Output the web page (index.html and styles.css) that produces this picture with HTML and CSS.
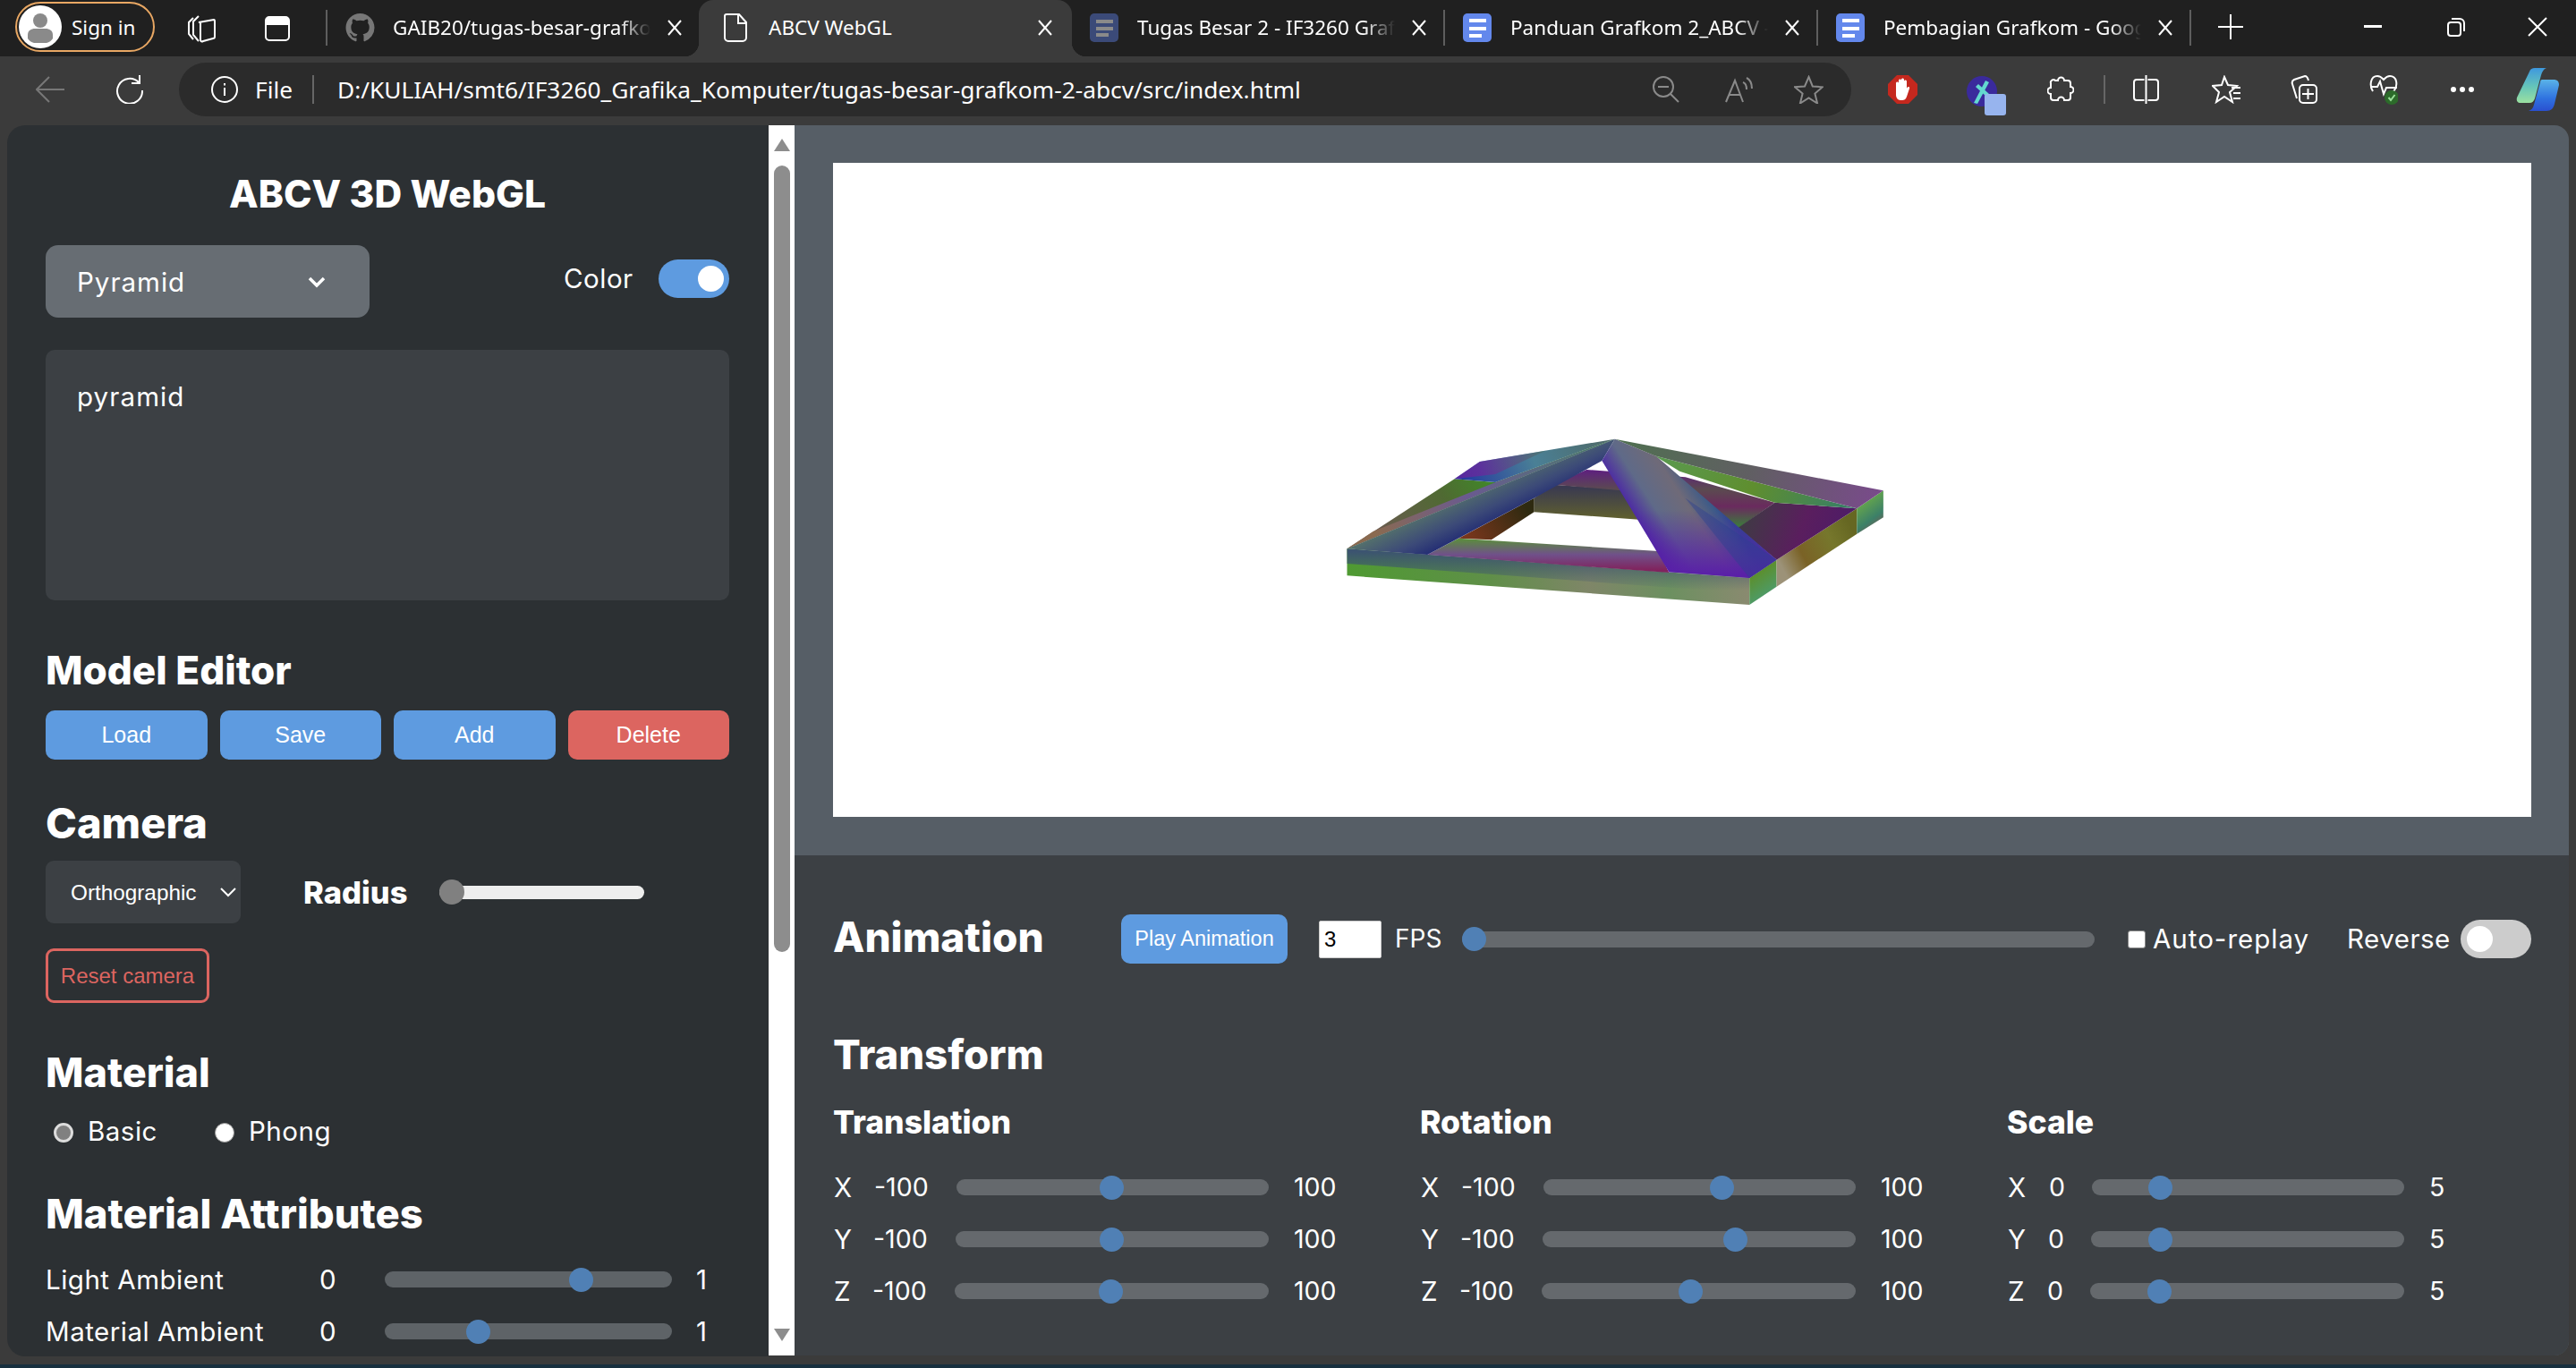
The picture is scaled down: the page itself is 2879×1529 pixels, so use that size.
FILE: index.html
```html
<!DOCTYPE html>
<html lang="en">
<head>
<meta charset="utf-8">
<title>ABCV WebGL</title>
<link rel="stylesheet" href="styles.css">
</head>
<body>
<header class="tabstrip">
  <div class="signin">
    <svg width="48" height="48" viewBox="0 0 48 48"><circle cx="24" cy="24" r="24" fill="#fff"/><circle cx="24" cy="17" r="8" fill="#8a8a8a"/><path d="M10 33c0-5 4-7 8-7h12c4 0 8 2 8 7v4a11 11 0 0 1-7 5H17a11 11 0 0 1-7-5z" fill="#8a8a8a"/></svg>
    <span>Sign in</span>
  </div>
  <svg class="ws" width="32" height="32" viewBox="0 0 32 32" fill="none" stroke="#fff" stroke-width="2"><path d="M6 4 1 9v13l5 6"/><path d="M12 2 6 8v15l6 7"/><path d="M13 9l17-3c1 0 1 1 1 2v17c0 1-1 2-2 2l-11 3c-2 1-3 0-3-2V11c0-1 0-2 1-2z" transform="translate(-1 0)"/></svg>
  <svg class="tabicon" width="28" height="28" viewBox="0 0 28 28" fill="none"><rect x="1" y="1" width="26" height="26" rx="4" stroke="#fff" stroke-width="2"/><path d="M1 5a4 4 0 0 1 4-4h18a4 4 0 0 1 4 4v5H1z" fill="#fff"/></svg>
  <i class="vsep"></i>
  <div class="tab">
    <svg class="fav" width="33" height="32" viewBox="0 0 16 16" fill="#777"><path d="M8 0C3.58 0 0 3.58 0 8c0 3.54 2.29 6.53 5.47 7.59.4.07.55-.17.55-.38 0-.19-.01-.82-.01-1.49-2.01.37-2.53-.49-2.69-.94-.09-.23-.48-.94-.82-1.13-.28-.15-.68-.52-.01-.53.63-.01 1.08.58 1.23.82.72 1.21 1.87.87 2.33.66.07-.52.28-.87.51-1.07-1.78-.2-3.64-.89-3.64-3.95 0-.87.31-1.59.82-2.15-.08-.2-.36-1.02.08-2.12 0 0 .67-.21 2.2.82.64-.18 1.32-.27 2-.27.68 0 1.36.09 2 .27 1.53-1.04 2.2-.82 2.2-.82.44 1.1.16 1.92.08 2.12.51.56.82 1.27.82 2.15 0 3.07-1.87 3.75-3.65 3.95.29.25.54.73.54 1.48 0 1.07-.01 1.93-.01 2.2 0 .21.15.46.55.38A8.013 8.013 0 0016 8c0-4.42-3.58-8-8-8z"/></svg>
    <span class="title fade">GAIB20/tugas-besar-grafkom-2-abcv</span>
    <svg class="x" width="18" height="18" viewBox="0 0 18 18" stroke="#fff" stroke-width="2"><path d="M2 1l14 16M16 1 2 17"/></svg>
  </div>
  <div class="tab active">
    <svg class="fav" width="33" height="32" viewBox="0 0 33 32" fill="none" stroke="#fff" stroke-width="2"><path d="M6 1h14l8 9v17a4 4 0 0 1-4 4H8a4 4 0 0 1-4-4V3a2 2 0 0 1 2-2z"/><path d="M19 1v10h9"/></svg>
    <span class="title">ABCV WebGL</span>
    <svg class="x" width="18" height="18" viewBox="0 0 18 18" stroke="#fff" stroke-width="2"><path d="M2 1l14 16M16 1 2 17"/></svg>
  </div>
  <div class="tab">
    <svg class="fav" width="33" height="32" viewBox="0 0 33 32"><rect width="32" height="32" rx="5" fill="#3b4a78"/><path d="M7 7h19v4H7zM7 15h19v4H7zM7 22h14v4H7z" fill="#8a8a8a"/></svg>
    <span class="title fade">Tugas Besar 2 - IF3260 Grafika Komputer</span>
    <svg class="x" width="18" height="18" viewBox="0 0 18 18" stroke="#fff" stroke-width="2"><path d="M2 1l14 16M16 1 2 17"/></svg>
  </div>
  <i class="vsep"></i>
  <div class="tab">
    <svg class="fav" width="33" height="32" viewBox="0 0 33 32"><rect width="32" height="32" rx="5" fill="#6388ec"/><path d="M7 6h19v4H7zM7 15h19v4H7zM7 23h14v4H7z" fill="#fff"/></svg>
    <span class="title fade">Panduan Grafkom 2_ABCV - Google</span>
    <svg class="x" width="18" height="18" viewBox="0 0 18 18" stroke="#fff" stroke-width="2"><path d="M2 1l14 16M16 1 2 17"/></svg>
  </div>
  <i class="vsep"></i>
  <div class="tab">
    <svg class="fav" width="33" height="32" viewBox="0 0 33 32"><rect width="32" height="32" rx="5" fill="#6388ec"/><path d="M7 6h19v4H7zM7 15h19v4H7zM7 23h14v4H7z" fill="#fff"/></svg>
    <span class="title fade">Pembagian Grafkom - Google Docs</span>
    <svg class="x" width="18" height="18" viewBox="0 0 18 18" stroke="#fff" stroke-width="2"><path d="M2 1l14 16M16 1 2 17"/></svg>
  </div>
  <i class="vsep"></i>
  <svg class="plus" width="28" height="28" viewBox="0 0 28 28" stroke="#fff" stroke-width="2"><path d="M14 0v28M0 14h28"/></svg>
  <svg class="win-min" width="20" height="4" viewBox="0 0 20 4"><path d="M0 0h20v3H0z" fill="#fff"/></svg>
  <svg class="win-res" width="20" height="22" viewBox="0 0 20 22" fill="none" stroke="#fff" stroke-width="2"><rect x="1" y="6" width="14" height="15" rx="3"/><path d="M5 2h9a5 5 0 0 1 5 5v9"/></svg>
  <svg class="win-x" width="22" height="22" viewBox="0 0 22 22" stroke="#fff" stroke-width="2"><path d="M1 1l20 20M21 1 1 21"/></svg>
</header>

<nav class="toolbar">
  <svg class="back" width="32" height="30" viewBox="0 0 32 30" fill="none" stroke="#777" stroke-width="2"><path d="M32 15H2M15 1 1 15l14 14"/></svg>
  <svg class="reload" width="32" height="32" viewBox="0 0 32 32" fill="none" stroke="#fff" stroke-width="2"><path d="M27 8a14 14 0 1 0 4 9"/><path d="M28 0v9h-9"/></svg>
  <div class="address">
    <svg class="info" width="30" height="30" viewBox="0 0 30 30" fill="none" stroke="#fff" stroke-width="2"><circle cx="15" cy="15" r="14"/><path d="M15 13v9M15 8v2.500"/></svg>
    <span class="file">File</span>
    <i class="addr-sep"></i>
    <span class="url">D:/KULIAH/smt6/IF3260_Grafika_Komputer/tugas-besar-grafkom-2-abcv/src/index.html</span>
    <svg class="zoom-ic" width="30" height="30" viewBox="0 0 30 30" fill="none" stroke="#8a8a8a" stroke-width="2"><circle cx="12" cy="12" r="11"/><path d="M6 12h12M20 20l9 9"/></svg>
    <svg class="read-ic" width="32" height="30" viewBox="0 0 32 30" fill="none" stroke="#8a8a8a" stroke-width="2"><path d="M2 29 12 5l9 24M5 21h13"/><path d="M21 7c3 1 4 4 4 8M25 2c4 2 6 6 6 12"/></svg>
    <svg class="star-ic" width="33" height="32" viewBox="0 0 33 32" fill="none" stroke="#8a8a8a" stroke-width="2"><path d="M16.500 2l4.300 10.500 11 .8-8.400 7.300 2.700 10.900-9.600-6-9.600 6 2.700-10.900L1 13.300l11-.8z"/></svg>
  </div>
  <svg class="t-shield" width="33" height="32" viewBox="0 0 33 32"><path d="M10 0h13l10 10v12L23 32H10L0 22V10z" fill="#c5281e"/><path d="M9 17V9c0-2 3-2 3 0V6c0-2 3-2 3 0V5c0-2 3-2 3 0v2c0-2 3-2 3 0v8c1-3 4-2 3 0l-3 9c-1 3-3 4-5 4h-2c-3 0-5-3-5-6z" fill="#fff"/></svg>
  <svg class="t-ext" width="44" height="44" viewBox="0 0 44 44"><circle cx="17" cy="17" r="17" fill="#3a2a9c"/><path d="M21 5 8 30l4 1L25 7z" fill="#63d8cf"/><path d="M13 9l12 11-3 3-12-11z" fill="#63d8cf"/><rect x="20" y="20" width="24" height="24" rx="3" fill="#97b4ee"/></svg>
  <svg class="t-puzzle" width="30" height="32" viewBox="0 0 30 32" fill="none" stroke="#fff" stroke-width="2"><path d="M9 6h3a3.500 3.500 0 1 1 7 0h4a3 3 0 0 1 3 3v4a3.500 3.500 0 1 1 0 7v5a3 3 0 0 1-3 3h-4a3.500 3.500 0 1 0-7 0H7a3 3 0 0 1-3-3v-4a3.500 3.500 0 1 1 0-7V9a3 3 0 0 1 5-3z"/></svg>
  <i class="tool-sep"></i>
  <svg class="t-split" width="29" height="32" viewBox="0 0 29 32" fill="none" stroke="#fff" stroke-width="2"><rect x="1" y="5" width="27" height="23" rx="3"/><path d="M14.500 0v32" stroke="#3b3b3b" stroke-width="4"/><path d="M14.500 0v32"/></svg>
  <svg class="t-fav" width="32" height="32" viewBox="0 0 32 32" fill="none" stroke="#fff" stroke-width="2"><path d="M14 2l4 9 10 1-8 7 3 11-9-6-9 6 3-11-7-7 10-1zM22 14h10M24 20h8M24 26h8"/></svg>
  <svg class="t-coll" width="30" height="32" viewBox="0 0 30 32" fill="none" stroke="#fff" stroke-width="2"><path d="M7 26 2 10c-1-3 0-4 2-5l12-4c2 0 3 1 4 5"/><rect x="10" y="11" width="19" height="20" rx="4"/><path d="M19.500 15v12M13 21h13"/></svg>
  <svg class="t-heart" width="32" height="36" viewBox="0 0 32 36" fill="none" stroke="#fff" stroke-width="2"><path d="M4 20C0 14 1 3 9 3c4 0 6 3 7 4 1-1 3-4 7-4 8 0 9 10 5 16l-8 9"/><path d="M1 15h8l3-6 4 14 3-7h12"/><circle cx="25" cy="27" r="8" fill="#2c6b2a" stroke="none"/><path d="M21.500 27l2.500 3 4.500-6" stroke="#9be09a"/></svg>
  <svg class="t-dots" width="26" height="6" viewBox="0 0 26 6" fill="#fff"><circle cx="3" cy="3" r="3"/><circle cx="13" cy="3" r="3"/><circle cx="23" cy="3" r="3"/></svg>
  <svg class="t-copilot" width="48" height="48" viewBox="0 0 48 48">
    <defs>
      <linearGradient id="cp1" x1="0" y1="0" x2="0" y2="1"><stop offset="0" stop-color="#3e98df"/><stop offset=".55" stop-color="#67c6b8"/><stop offset="1" stop-color="#9be0a0"/></linearGradient>
      <linearGradient id="cp2" x1="0" y1="0" x2="0" y2="1"><stop offset="0" stop-color="#5ab3e8"/><stop offset=".6" stop-color="#2f72e0"/><stop offset="1" stop-color="#2a50d0"/></linearGradient>
    </defs>
    <path d="M15 4c1-3 3-4 6-4h13c-3 1-5 4-6 8l-7 26c-1 3-3 5-6 5H5c-3 0-5-2-4-6z" fill="url(#cp1)"/>
    <path d="M29 13h13c4 0 6 2 6 6l-5 21c-1 5-4 8-9 8H14c3-1 5-3 6-7l7-25c0-2 1-3 2-3z" fill="url(#cp2)"/>
  </svg>
</nav>

<main class="workspace">
  <aside class="sidebar">
    <h1 class="app-title">ABCV 3D WebGL</h1>
    <div class="model-row">
      <div class="select-wrap">
        <select class="model-select"><option>Pyramid</option></select>
        <svg class="chev" width="20" height="13" viewBox="0 0 20 13" fill="none" stroke="#fff" stroke-width="3.500"><path d="M2 2l8 8 8-8"/></svg>
      </div>
      <div class="color-group">
        <span class="txt">Color</span>
        <span class="toggle on"><i></i></span>
      </div>
    </div>
    <div class="desc">pyramid</div>
    <h2 class="h-editor">Model Editor</h2>
    <div class="btn-grid">
      <button class="btn">Load</button>
      <button class="btn">Save</button>
      <button class="btn">Add</button>
      <button class="btn danger">Delete</button>
    </div>
    <h2 class="h-camera">Camera</h2>
    <div class="camera-row">
      <div class="select-wrap small">
        <select class="cam-select"><option>Orthographic</option></select>
        <svg class="chev2" width="18" height="11" viewBox="0 0 18 11" fill="none" stroke="#fff" stroke-width="2"><path d="M1 1l8 8 8-8"/></svg>
      </div>
      <span class="radius">Radius</span>
      <input class="radius-range" type="range" min="0" max="100" value="0">
    </div>
    <button class="reset">Reset camera</button>
    <h2 class="h-material">Material</h2>
    <div class="radios">
      <label class="radio-item first"><input type="radio" name="mat" checked><span class="txt">Basic</span></label>
      <label class="radio-item"><input type="radio" name="mat"><span class="txt">Phong</span></label>
    </div>
    <h2 class="h-attr">Material Attributes</h2>
    <div class="attr first-attr"><span class="txt">Light Ambient</span><span class="txt">0</span><input class="rng dark" type="range" min="0" max="100" value="69.500"><span class="txt attr-max">1</span></div>
    <div class="attr"><span class="txt">Material Ambient</span><span class="txt">0</span><input class="rng dark" type="range" min="0" max="100" value="30.800"><span class="txt attr-max">1</span></div>
  </aside>
  <div class="scrollbar">
    <svg width="18" height="14" viewBox="0 0 18 14"><path d="M9 0 18 14H0z" fill="#8d8d8d"/></svg>
    <div class="scroll-thumb"></div>
    <svg class="scroll-down" width="18" height="14" viewBox="0 0 18 14"><path d="M9 14 18 0H0z" fill="#8d8d8d"/></svg>
  </div>
  <section class="stage">
    <div class="canvas-wrap">
      <div class="gl-canvas">
        <svg class="model" width="680" height="240" viewBox="0 0 1568 720" preserveAspectRatio="none">
          <defs>
            <linearGradient id="g1" gradientUnits="userSpaceOnUse" x1="130" y1="560" x2="1165" y2="560"><stop offset="0" stop-color="#4f9a32"/><stop offset=".35" stop-color="#5f8f48"/><stop offset=".6" stop-color="#7f8668"/><stop offset=".8" stop-color="#6c9060"/><stop offset="1" stop-color="#8a8a70"/></linearGradient>
            <linearGradient id="g1t" gradientUnits="userSpaceOnUse" x1="0" y1="470" x2="0" y2="600"><stop offset="0" stop-color="#3c5470"/><stop offset="1" stop-color="#3c5470" stop-opacity="0"/></linearGradient>
            <linearGradient id="g2" gradientUnits="userSpaceOnUse" x1="1165" y1="560" x2="1235" y2="640"><stop offset="0" stop-color="#5b8f2f"/><stop offset=".6" stop-color="#4f9a62"/><stop offset="1" stop-color="#7a6fb0"/></linearGradient>
            <linearGradient id="g3" gradientUnits="userSpaceOnUse" x1="1240" y1="500" x2="1440" y2="420"><stop offset="0" stop-color="#9c9278"/><stop offset=".3" stop-color="#7a6226"/><stop offset=".7" stop-color="#76772c"/><stop offset="1" stop-color="#666722"/></linearGradient>
            <linearGradient id="g4" gradientUnits="userSpaceOnUse" x1="1442" y1="330" x2="1510" y2="400"><stop offset="0" stop-color="#5fa050"/><stop offset=".5" stop-color="#3c8068"/><stop offset="1" stop-color="#8a4a4a"/></linearGradient>
            <linearGradient id="g5" gradientUnits="userSpaceOnUse" x1="818" y1="100" x2="1510" y2="300"><stop offset="0" stop-color="#4f7050"/><stop offset=".5" stop-color="#605f62"/><stop offset="1" stop-color="#7a4a8c"/></linearGradient>
            <linearGradient id="g6" gradientUnits="userSpaceOnUse" x1="920" y1="150" x2="1440" y2="320"><stop offset="0" stop-color="#5a9a50"/><stop offset=".5" stop-color="#5f8e2f"/><stop offset="1" stop-color="#357e6a"/></linearGradient>
            <linearGradient id="g7" gradientUnits="userSpaceOnUse" x1="1150" y1="350" x2="1400" y2="420"><stop offset="0" stop-color="#3f3a44"/><stop offset=".6" stop-color="#5a1e5e"/><stop offset="1" stop-color="#4f1c66"/></linearGradient>
            <linearGradient id="g8" gradientUnits="userSpaceOnUse" x1="200" y1="400" x2="510" y2="230"><stop offset="0" stop-color="#6a5a50"/><stop offset=".6" stop-color="#4f6a32"/><stop offset="1" stop-color="#3f8a28"/></linearGradient>
            <linearGradient id="g9" gradientUnits="userSpaceOnUse" x1="420" y1="230" x2="800" y2="100"><stop offset="0" stop-color="#2438a0"/><stop offset=".5" stop-color="#4a8096"/><stop offset="1" stop-color="#4f6a68"/></linearGradient>
            <linearGradient id="g10" gradientUnits="userSpaceOnUse" x1="470" y1="180" x2="640" y2="150"><stop offset="0" stop-color="#7a1e9c"/><stop offset="1" stop-color="#4a7060"/></linearGradient>
            <linearGradient id="g11" gradientUnits="userSpaceOnUse" x1="400" y1="270" x2="500" y2="430"><stop offset="0" stop-color="#5a7a68"/><stop offset=".5" stop-color="#3c4a78"/><stop offset="1" stop-color="#0e1470"/></linearGradient>
            <linearGradient id="g12" gradientUnits="userSpaceOnUse" x1="860" y1="350" x2="1060" y2="250"><stop offset="0" stop-color="#4a20a8"/><stop offset=".3" stop-color="#5f6a88"/><stop offset=".65" stop-color="#6f6a78"/><stop offset=".9" stop-color="#3c5a88"/><stop offset="1" stop-color="#2c4890"/></linearGradient>
            <linearGradient id="g13" gradientUnits="userSpaceOnUse" x1="0" y1="330" x2="0" y2="550"><stop offset="0" stop-color="#5a1fa8" stop-opacity="0"/><stop offset="1" stop-color="#5a1fa8"/></linearGradient>
            <linearGradient id="g14" gradientUnits="userSpaceOnUse" x1="0" y1="430" x2="0" y2="530"><stop offset="0" stop-color="#5c8a40"/><stop offset=".5" stop-color="#70508a"/><stop offset="1" stop-color="#80245e"/></linearGradient>
            <linearGradient id="g15" gradientUnits="userSpaceOnUse" x1="440" y1="420" x2="600" y2="340"><stop offset="0" stop-color="#78361c"/><stop offset="1" stop-color="#2e2a10"/></linearGradient>
            <linearGradient id="g16" gradientUnits="userSpaceOnUse" x1="0" y1="255" x2="0" y2="355"><stop offset="0" stop-color="#3a3a50"/><stop offset="1" stop-color="#5e5e30"/></linearGradient>
            <linearGradient id="g17" gradientUnits="userSpaceOnUse" x1="0" y1="195" x2="0" y2="385"><stop offset="0" stop-color="#5e1f80"/><stop offset=".35" stop-color="#5b4a50"/><stop offset=".65" stop-color="#6a2a5e"/><stop offset="1" stop-color="#3c7a3c"/></linearGradient>
            <linearGradient id="g18" gradientUnits="userSpaceOnUse" x1="195" y1="400" x2="800" y2="100"><stop offset="0" stop-color="#8a6a50"/><stop offset=".4" stop-color="#6a5a90"/><stop offset="1" stop-color="#4a7a70"/></linearGradient>
          </defs>
          <polygon points="128,460 1165,558 1165,648 128,550" fill="url(#g1)"/>
          <polygon points="128,460 1165,558 1165,610 128,510" fill="url(#g1t)"/>
          <polygon points="1165,558 1235,497 1235,587 1165,648" fill="url(#g2)"/>
          <polygon points="1235,497 1442,325 1442,410 1235,587" fill="url(#g3)"/>
          <polygon points="1442,325 1510,265 1510,355 1442,410" fill="url(#g4)"/>
          <polygon points="610,290 660,245 880,265 880,362 610,337" fill="url(#g16)"/>
          <polygon points="660,245 745,195 1000,220 1230,305 1135,392 880,360 835,265" fill="url(#g17)"/>
          <polygon points="415,425 610,290 610,337 500,430" fill="url(#g15)"/>
          <polygon points="335,480 415,425 930,468 958,540" fill="url(#g14)"/>
          <polygon points="1230,305 1442,325 1235,497 1135,390" fill="url(#g7)"/>
          <polygon points="920,148 1442,325 1230,305 985,200" fill="url(#g6)"/>
          <polygon points="818,92 1510,265 1442,325 920,148" fill="url(#g5)"/>
          <polygon points="128,460 405,226 510,237 818,92" fill="url(#g8)"/>
          <polygon points="405,226 470,168 818,92 510,237" fill="url(#g9)"/>
          <polygon points="405,226 470,168 640,131 510,210" fill="url(#g10)" opacity=".6"/>
          <polygon points="128,460 195,402 505,240 818,92" fill="url(#g18)"/>
          <polygon points="128,460 818,92 785,165 610,290 335,480" fill="url(#g11)"/>
          <polygon points="785,165 818,92 925,150 1235,497 1165,558 958,538" fill="url(#g12)"/>
          <polygon points="785,165 818,92 925,150 1235,497 1165,558 958,538" fill="url(#g13)"/>
          <polygon points="1000,290 1235,497 1165,558" fill="#2c4090" opacity=".45"/>
        </svg>
      </div>
    </div>
    <div class="panel">
      <div class="anim-row">
        <h2 class="h-anim">Animation</h2>
        <button class="btn play">Play Animation</button>
        <input class="fps-input" type="text" value="3">
        <span class="txt fps">FPS</span>
        <input class="rng fps-range" type="range" min="0" max="100" value="0">
        <input class="auto" type="checkbox">
        <span class="txt auto-label">Auto-replay</span>
        <span class="txt rev-label">Reverse</span>
        <span class="toggle"><i></i></span>
      </div>
      <h2 class="h-transform">Transform</h2>
      <div class="transforms">
        <div class="tf-col">
          <h3>Translation</h3>
          <div class="tf-row first-row"><span class="txt axis">X</span><span class="txt min">-100</span><input class="rng" type="range" value="49.800"><span class="txt max">100</span></div>
          <div class="tf-row"><span class="txt axis axis-y">Y</span><span class="txt min">-100</span><input class="rng" type="range" value="49.800"><span class="txt max">100</span></div>
          <div class="tf-row"><span class="txt axis axis-z">Z</span><span class="txt min">-100</span><input class="rng" type="range" value="49.800"><span class="txt max">100</span></div>
        </div>
        <div class="tf-col">
          <h3>Rotation</h3>
          <div class="tf-row first-row"><span class="txt axis">X</span><span class="txt min">-100</span><input class="rng" type="range" value="57.800"><span class="txt max">100</span></div>
          <div class="tf-row"><span class="txt axis axis-y">Y</span><span class="txt min">-100</span><input class="rng" type="range" value="62.500"><span class="txt max">100</span></div>
          <div class="tf-row"><span class="txt axis axis-z">Z</span><span class="txt min">-100</span><input class="rng" type="range" value="47.200"><span class="txt max">100</span></div>
        </div>
        <div class="tf-col scale">
          <h3>Scale</h3>
          <div class="tf-row first-row"><span class="txt axis">X</span><span class="txt min">0</span><input class="rng" type="range" value="19.700"><span class="txt max">5</span></div>
          <div class="tf-row"><span class="txt axis axis-y">Y</span><span class="txt min">0</span><input class="rng" type="range" value="19.700"><span class="txt max">5</span></div>
          <div class="tf-row"><span class="txt axis axis-z">Z</span><span class="txt min">0</span><input class="rng" type="range" value="19.700"><span class="txt max">5</span></div>
        </div>
      </div>
    </div>
  </section>
</main>
<div class="desktop-edge"></div>
</body>
</html>
```

FILE: styles.css
```css
* { box-sizing: border-box; }
html, body { margin: 0; padding: 0; }
body {
  width: 2879px; height: 1529px; overflow: hidden;
  background: #3b3b3b; color: #fff;
  font-family: Inter, "Noto Sans", sans-serif;
  display: flex; flex-direction: column;
}
svg { flex: none; display: block; }

/* ---------- tab strip ---------- */
.tabstrip {
  height: 63px; flex: none; background: #202020;
  display: flex; align-items: center;
  font-family: "Noto Sans", sans-serif; font-size: 22.500px;
}
.signin {
  margin-left: 17px; width: 156px; height: 56px; flex: none;
  border: 2px solid #e8a763; border-radius: 28px;
  display: flex; align-items: center; padding-left: 2px; gap: 11px;
  margin-top: -3px;
}
.ws { margin-left: 37px; }
.tabicon { margin-left: 54px; }
.vsep { flex: none; width: 2px; height: 40px; background: #5e5e5e; margin-top: -2px; }
.tabicon + .vsep { margin-left: 40px; }
.tab {
  flex: none; width: 415px; height: 63px; position: relative;
  display: flex; align-items: center; padding-left: 20px;
}
.tab.active {
  width: 417px; background: #3b3b3b; border-radius: 16px 16px 0 0; padding-left: 25px;
}
.tab.active::before, .tab.active::after {
  content: ""; position: absolute; bottom: 0; width: 16px; height: 16px;
}
.tab.active::before { left: -16px; background: radial-gradient(circle at 0 0, transparent 16px, #3b3b3b 16.500px); }
.tab.active::after { right: -16px; background: radial-gradient(circle at 100% 0, transparent 16px, #3b3b3b 16.500px); }
.tab .fav { margin-top: -2px; }
.title {
  margin-left: 20px; width: 288px; white-space: nowrap; overflow: hidden; margin-top: -2px;
}
.fade {
  -webkit-mask-image: linear-gradient(90deg, #000 88%, transparent 100%);
  mask-image: linear-gradient(90deg, #000 88%, transparent 100%);
}
.x { margin-left: 18px; margin-top: -2px; }
.active .x { margin-left: 21px; }
.active .title { width: 279px; }
.plus { margin-left: 30px; margin-top: -4px; }
.win-min { margin-left: 135px; margin-top: -4px; }
.win-res { margin-left: 73px; margin-top: -4px; }
.win-x { margin-left: 70px; margin-top: -4px; }

/* ---------- toolbar ---------- */
.toolbar {
  height: 77px; flex: none; background: #3b3b3b;
  display: flex; align-items: center; padding-bottom: 3px;
  font-family: "Noto Sans", sans-serif;
}
.back { margin-left: 40px; }
.reload { margin-left: 56px; }
.address {
  margin-left: 40px; width: 1869px; height: 60px; flex: none;
  background: #2b2b2b; border-radius: 30px;
  display: flex; align-items: center; font-size: 26.300px;
}
.info { margin-left: 36px; }
.file { margin-left: 19px; width: 44px; }
.addr-sep { width: 2px; height: 32px; background: #666; margin-left: 20px; }
.url { margin-left: 26px; width: 1470px; white-space: nowrap; }
.read-ic { margin-left: 50px; }
.star-ic { margin-left: 46px; }
.t-shield { margin-left: 41px; }
.t-ext { margin-left: 55px; margin-top: 14px; }
.t-puzzle { margin-left: 46px; }
.tool-sep { width: 2px; height: 32px; background: #666; margin-left: 33px; flex: none; }
.t-split { margin-left: 31px; }
.t-fav { margin-left: 59px; }
.t-coll { margin-left: 56px; }
.t-heart { margin-left: 58px; }
.t-dots { margin-left: 59px; }
.t-copilot { margin-left: 47px; }

/* ---------- workspace ---------- */
.workspace {
  height: 1376px; flex: none; display: flex; padding: 0 8px;
}
.sidebar {
  width: 851px; flex: none; height: 100%; overflow: hidden;
  background: #2c3033; border-radius: 20px 0 0 20px;
  padding: 50px 44px 0 43px;
}
.txt { font-size: 29.500px; line-height: 40px; white-space: nowrap; letter-spacing: .5px; }
h1, h2, h3 { margin: 0; font-weight: 800; white-space: nowrap; }
.app-title { font-size: 42.500px; line-height: 54px; text-align: center; }
h2 { font-size: 45px; line-height: 54px; }

.model-row { margin-top: 30px; display: flex; justify-content: space-between; align-items: center; }
.select-wrap { position: relative; width: 362px; height: 81px; }
.select-wrap.small { width: 218px; height: 70px; }
select {
  appearance: none; -webkit-appearance: none; border: 0; color: #fff; width: 100%; height: 100%; display: block;
  font-family: Inter, sans-serif; outline: 0;
}
.model-select { background: #676d73; border-radius: 14px; padding-left: 35px; font-size: 29.500px; letter-spacing: 1px; }
.chev { position: absolute; left: 293px; top: 35px; }
.cam-select {
  background: #3c4044; border-radius: 9px; padding-left: 28px;
  font-family: "Liberation Sans", sans-serif; font-size: 24.300px;
}
.chev2 { position: absolute; left: 195px; top: 30px; }
.color-group { display: flex; align-items: center; padding-bottom: 7px; }
.color-group .txt { width: 106px; }
.toggle {
  display: block; flex: none; width: 79px; height: 43px; border-radius: 22px; background: #ccc; padding: 7px;
}
.toggle i { display: block; width: 29px; height: 29px; border-radius: 50%; background: #fff; }
.toggle.on { background: #5e9be0; padding-left: 44px; }

.desc {
  margin-top: 36px; height: 280px; background: #3c4044; border-radius: 10px;
  padding: 32px 0 0 35px; font-size: 29.500px; line-height: 40px; letter-spacing: 1.100px;
}
.h-editor { margin-top: 51px; font-size: 44px; }
.btn-grid { margin-top: 18px; display: grid; grid-template-columns: repeat(4, 1fr); gap: 14px; }
.btn {
  height: 55px; border: 0; border-radius: 10px; background: #5e9be0; color: #fff;
  font-family: "Liberation Sans", sans-serif; font-size: 25px; padding: 0;
}
.btn.danger { background: #dc6560; }
.h-camera { margin-top: 44px; font-size: 47px; }
.camera-row { margin-top: 15px; height: 70px; display: flex; align-items: center; }
.radius { margin-left: 70px; width: 152px; font-weight: 800; font-size: 34.500px; }
.radius-range { appearance: none; -webkit-appearance: none; width: 229px; height: 28px; margin: 0; background: transparent; flex: none; }
.radius-range::-webkit-slider-runnable-track { height: 15px; border-radius: 8px; background: #eee; }
.radius-range::-webkit-slider-thumb {
  -webkit-appearance: none; width: 28px; height: 28px; border-radius: 50%; background: #808080; margin-top: -6.500px;
}
.reset {
  display: block; margin-top: 28px; width: 183px; height: 61px; padding: 0;
  background: transparent; border: 3px solid #dc6560; border-radius: 9px; color: #dc6560;
  font-family: "Liberation Sans", sans-serif; font-size: 24px;
}
.h-material { margin-top: 51px; }
.radios { margin-top: 18px; height: 40px; display: flex; }
.radio-item { display: flex; align-items: center; }
.radio-item.first { width: 189px; padding-left: 9px; }
.radio-item input {
  appearance: none; -webkit-appearance: none; margin: 4px 16px 0 0; width: 22px; height: 22px; border-radius: 50%;
  background: #fff; border: 1px solid #999; flex: none;
}
.radio-item input:checked { background: #808080; border: 3px solid #ddd; }
.h-attr { margin-top: 46px; font-size: 45.400px; }
.attr { margin-top: 18px; height: 40px; display: grid; grid-template-columns: 306px 73px 321px auto; align-items: center; }
.first-attr { margin-top: 26px; }
.attr-max { margin-left: 27px; }

.rng { appearance: none; -webkit-appearance: none; height: 27px; margin: 0; background: transparent; width: 100%; min-width: 0; flex: 1 1 0; }
.rng::-webkit-slider-runnable-track { height: 18px; border-radius: 9px; background: #65696d; }
.rng.dark::-webkit-slider-runnable-track { background: #5e6367; }
.rng::-webkit-slider-thumb {
  -webkit-appearance: none; width: 27px; height: 27px; border-radius: 50%; background: #5080b5; margin-top: -4.500px;
}

/* ---------- scrollbar ---------- */
.scrollbar {
  width: 29px; flex: none; background: #fff; display: flex; flex-direction: column; align-items: center;
  padding: 15px 0 16px 0; height: 1375px;
}
.scroll-thumb { width: 18px; height: 879px; background: #8d8d8d; border-radius: 9px; margin-top: 16px; }
.scroll-down { margin-top: auto; }

/* ---------- stage ---------- */
.stage {
  flex: 1; min-width: 0; height: 1375px; background: #565e66; border-radius: 0 16px 16px 0; overflow: hidden;
  display: flex; flex-direction: column;
}
.canvas-wrap { height: 816px; flex: none; padding: 42px 42px 43px 43px; }
.gl-canvas { height: 731px; background: #fff; position: relative; }
.model { position: absolute; left: 519px; top: 278px; }
.panel { flex: 1; background: #3c4044; padding: 66px 42px 0 44px; }
.anim-row { display: flex; align-items: center; height: 55px; }
.h-anim { width: 322px; font-size: 46px; margin-left: -1px; padding-bottom: 6px; flex: none; }
.anim-row .txt { margin-top: -2px; }
.btn.play { width: 186px; font-size: 23.500px; flex: none; }
.fps-input {
  width: 70px; height: 42px; margin-left: 35px; border: 1px solid #ccc; border-radius: 2px; background: #fff; color: #000;
  font-family: "Liberation Sans", sans-serif; font-size: 24px; padding: 0 5px; outline: 0; flex: none;
}
.txt.fps { margin-left: 15px; width: 75px; font-size: 28px; letter-spacing: 0; flex: none; }
.rng.fps-range { flex: none; width: 707px; }
.auto { width: 20px; height: 20px; margin: 0 0 0 37px; flex: none; appearance: none; -webkit-appearance: none; background: #fff; border: 1px solid #8a8a8a; border-radius: 3px; }
.auto-label { margin-left: 8px; width: 217px; flex: none; letter-spacing: 1px; }
.rev-label { width: 127px; flex: none; }
.h-transform { margin-top: 75px; margin-left: -1px; font-size: 45.500px; }
.transforms { display: grid; grid-template-columns: repeat(3, 656px); margin-top: 27px; }
h3 { font-size: 35.500px; line-height: 44px; margin-left: -1px; }
.tf-row { width: 558px; height: 40px; margin-top: 18px; display: flex; align-items: center; }
.first-row { margin-top: 30px; }
.axis { width: 45px; flex: none; }
.axis-y { width: 44px; }
.axis-z { width: 43px; }
.min { width: 92px; flex: none; letter-spacing: 0; font-size: 28.500px; }
.max { width: 72px; flex: none; padding-left: 28px; letter-spacing: 0; font-size: 28.500px; }
.scale .tf-row { width: 488px; }
.scale .axis { width: 46px; }
.scale .axis-y { width: 45px; }
.scale .axis-z { width: 44px; }
.scale .min { width: 48px; }
.scale .max { width: 45px; }

.desktop-edge { flex: 1; background: linear-gradient(#3b3b3b 0 9px, #18303f 9px); }
```
